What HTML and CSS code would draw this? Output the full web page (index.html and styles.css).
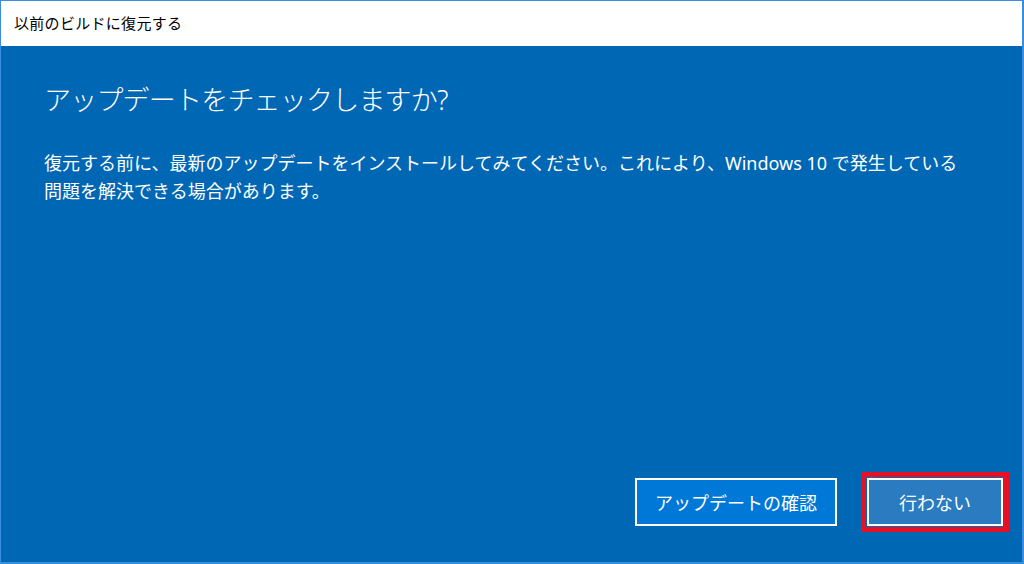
FILE: index.html
```html
<!DOCTYPE html>
<html lang="ja">
<head>
<meta charset="utf-8">
<title>以前のビルドに復元する</title>
<link rel="stylesheet" href="styles.css">
</head>
<body>
<div class="window">
  <div class="titlebar">以前のビルドに復元する</div>
  <div class="content">
    <h1 class="heading">アップデートをチェックしますか?</h1>
    <p class="message">復元する前に、最新のアップデートをインストールしてみてください。これにより、Windows 10 で発生している<br>問題を解決できる場合があります。</p>
    <div class="spacer"></div>
    <div class="actions">
      <button class="btn btn-primary">アップデートの確認</button>
      <button class="btn btn-secondary">行わない</button>
    </div>
  </div>
</div>
</body>
</html>
```

FILE: styles.css
```css
html, body {
  margin: 0;
  padding: 0;
  width: 1024px;
  height: 564px;
  overflow: hidden;
}

.window {
  box-sizing: border-box;
  width: 1024px;
  height: 564px;
  border: 1px solid #3a8ee0;
  border-right-width: 2px;
  border-bottom-width: 2px;
  display: flex;
  flex-direction: column;
  font-family: "Noto Sans", "Noto Sans CJK JP", sans-serif;
}

.titlebar {
  height: 45px;
  flex: 0 0 45px;
  background: #ffffff;
  color: #000000;
  font-size: 15px;
  line-height: 45px;
  padding-left: 13px;
  letter-spacing: 0.3px;
  box-sizing: border-box;
}

.content {
  flex: 1;
  background: #0067b4;
  color: #ffffff;
  display: flex;
  flex-direction: column;
  padding: 0 19px 36px 43px;
}

.heading {
  margin: 36px 0 0 0;
  font-size: 27px;
  line-height: 36px;
  font-weight: 300;
  letter-spacing: -0.8px;
}

.message {
  margin: 31px 0 0 0;
  font-size: 18px;
  line-height: 28px;
  font-weight: 400;
  white-space: nowrap;
}

.spacer {
  flex: 1;
}

.actions {
  display: flex;
  justify-content: flex-end;
  gap: 30px;
}

.btn {
  box-sizing: border-box;
  height: 48px;
  border: 2px solid #ffffff;
  color: #ffffff;
  font-family: "Noto Sans", "Noto Sans CJK JP", sans-serif;
  font-size: 18px;
  padding: 0;
  margin: 0;
  cursor: pointer;
}

.btn-primary {
  width: 202px;
  background: #0078d7;
}

.btn-secondary {
  width: 136px;
  background: #2a7bc0;
  outline: 5px solid #e81123;
  outline-offset: 1px;
}
```
